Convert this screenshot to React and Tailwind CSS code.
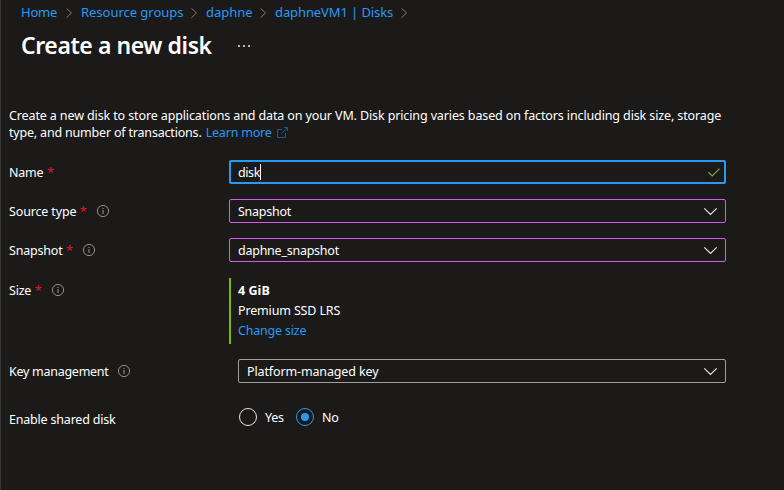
const crumbs = [
  { label: 'Home', cls: 'w-[38px]' },
  { label: 'Resource groups', cls: 'w-[103px] tracking-[-0.03px]' },
  { label: 'daphne', cls: 'w-[47px] tracking-[0px]' },
  { label: 'daphneVM1 | Disks', cls: 'w-[119px] tracking-[-0.1px]' },
];

function Info() {
  return (
    <svg className="size-3 shrink-0 overflow-visible text-[#8f8e8d]" viewBox="0 0 12 12" fill="none" stroke="currentColor">
      <circle cx="6" cy="6" r="5.6" strokeWidth="1" />
      <path d="M6 5v4M6 3v1.1" strokeWidth="1.1" />
    </svg>
  );
}

function Chevron() {
  return (
    <svg className="h-[7px] w-[13px] shrink-0 overflow-visible" viewBox="0 0 13 7" fill="none" stroke="#e8e7e6" strokeWidth="1.2">
      <path d="M.3.4 6.5 6.5 12.7.4" />
    </svg>
  );
}

function Label({ children, required, info, gap = 'ml-[10px]' }) {
  return (
    <div className="flex w-[220px] shrink-0 items-center whitespace-nowrap">
      <span>{children}</span>
      {required && <span className="ml-[3.5px] text-[13px] text-[#e0142c]">*</span>}
      {info && <span className={'flex ' + gap}><Info /></span>}
    </div>
  );
}

function Select({ children, border, text = '' }) {
  return (
    <div className={'flex h-6 flex-1 items-center justify-between rounded-[2px] border pl-2 pr-2 ' + border}>
      <span className={text}>{children}</span>
      <Chevron />
    </div>
  );
}

function Radio({ on, children }) {
  return (
    <div className="flex items-center">
      <span className={'flex size-[18px] items-center justify-center rounded-full border ' + (on ? 'border-[#2899f5]' : 'border-[#e5e4e3]')}>
        {on && <span className="size-2 rounded-full bg-[#2899f5]" />}
      </span>
      <span className="ml-2">{children}</span>
    </div>
  );
}

export default function App() {
  return (
    <div className="h-[490px] w-[784px] overflow-hidden border-l border-[#383736] bg-[#1b1a19] font-['Noto_Sans','Open_Sans',sans-serif] text-[12.5px] leading-[17px] tracking-[-0.2px] text-white">
      <nav className="flex h-[25px] items-center pl-5 text-[13px] text-[#2899f5]">
        {crumbs.map((c) => (
          <div key={c.label} className="flex items-center whitespace-nowrap">
            <span className={c.cls}>{c.label}</span>
            <svg className="ml-[7px] mr-[9px] h-[10px] w-[6px] overflow-visible" viewBox="0 0 6 10" fill="none" stroke="#7d7c7b">
              <path d="M.5.3 5.5 5 .5 9.7" />
            </svg>
          </div>
        ))}
      </nav>
      <header className="flex h-10 items-center pl-5">
        <h1 className="w-[217px] whitespace-nowrap text-[23px] font-semibold leading-7 tracking-[-0.42px]">Create a new disk</h1>
        <svg className="mt-[2px] h-[2px] w-3" viewBox="0 0 12 2" fill="#b5b4b3">
          <path d="M0 0h2v2H0zM5 0h2v2H5zM10 0h2v2h-2z" />
        </svg>
      </header>
      <main className="ml-2 mt-[42px] w-[717px]">
        <p className="h-[34px] whitespace-nowrap tracking-[-0.12px]">
          Create a new disk to store applications and data on your VM. Disk pricing varies based on factors including disk size, storage
          <br />
          <span className="tracking-[-0.19px]">
            type, and number of transactions.{' '}
            <a className="ml-px text-[#2899f5]">Learn more</a>
          </span>
          <svg className="ml-[5px] inline size-[11px] align-[-1px]" viewBox="0 0 11 11" fill="none" stroke="#0f5cab">
            <path d="M5 2.5H.5v8h8V6M4.5 6.5l6-6M7 .5h3.5V4" />
          </svg>
        </p>
        <div className="mt-[19px] flex h-6 items-center">
          <Label required>Name</Label>
          <div className="flex h-6 flex-1 items-center rounded-[2px] border-2 border-[#2899f5] pl-[7px] pr-1">
            <span className="tracking-[-0.4px]">disk</span>
            <span className="h-4 w-px bg-white" />
            <svg className="ml-auto h-[9px] w-3" viewBox="0 0 12 9" fill="none" stroke="#7ba54a" strokeWidth="1.2">
              <path d="M.4 4.3 4.2 8 11.6.6" />
            </svg>
          </div>
        </div>
        <div className="mt-[15px] flex h-6 items-center">
          <Label required info>
            <span className="tracking-[-0.15px]">Source type</span>
          </Label>
          <Select border="border-[#d659f0]" text="tracking-[-0.25px]">Snapshot</Select>
        </div>
        <div className="mt-[15px] flex h-6 items-center">
          <Label required info>Snapshot</Label>
          <Select border="border-[#d659f0]" text="tracking-[-0.25px]">daphne_snapshot</Select>
        </div>
        <div className="mt-4 flex h-[66px] items-start">
          <div className="flex h-6 items-center"><Label required info>Size</Label></div>
          <div className="h-[66px] border-l-2 border-[#7fba00] pl-[7px] pt-[3px] leading-5">
            <div className="font-bold tracking-[0.05px]">4 GiB</div>
            <div className="tracking-[-0.15px]">Premium SSD LRS</div>
            <a className="block text-[#2899f5]">Change size</a>
          </div>
        </div>
        <div className="mt-[15px] flex h-6 items-center">
          <Label info gap="ml-[9px]"><span className="tracking-[-0.27px]">Key management</span></Label>
          <div className="flex flex-1 pl-[9px]">
            <Select border="border-[#a19f9d]" text="tracking-[-0.13px]">Platform-managed key</Select>
          </div>
        </div>
        <div className="mt-[22px] flex h-6 items-center">
          <div className="pt-1"><Label>Enable shared disk</Label></div>
          <div className="flex gap-3 pl-[10px]">
            <Radio>Yes</Radio>
            <Radio on>No</Radio>
          </div>
        </div>
      </main>
    </div>
  );
}
